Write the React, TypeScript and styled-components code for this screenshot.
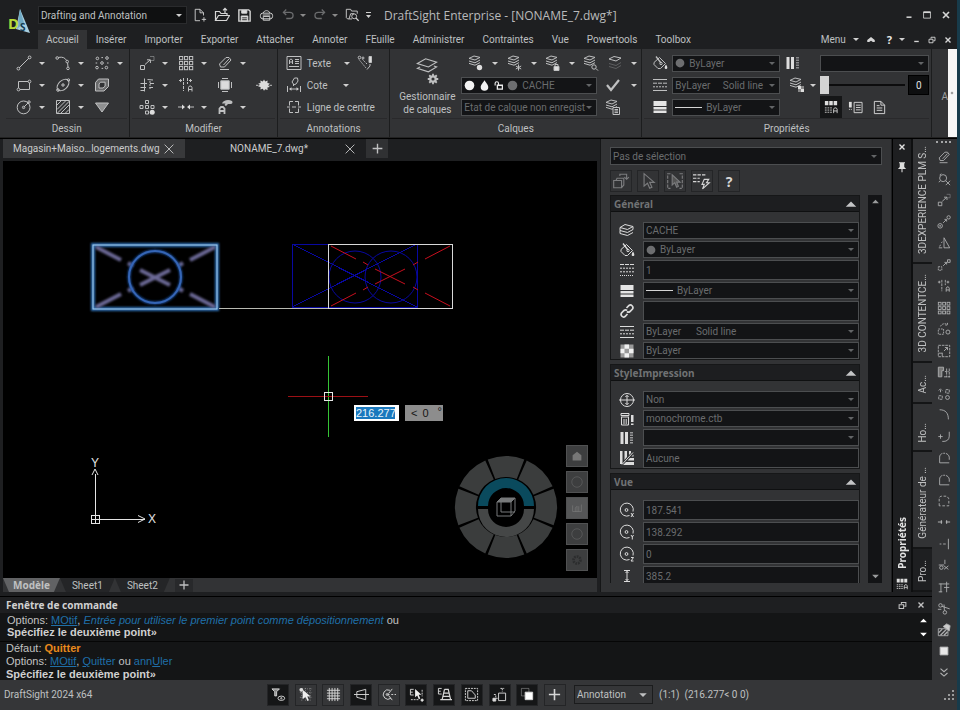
import React from "react";
import styled, { createGlobalStyle, css } from "styled-components";

const UI = `Roboto, "Noto Sans", sans-serif`;
const BOLD = `"Noto Sans", "Open Sans", sans-serif`;
const CMD = `"Liberation Sans", Arial, sans-serif`;

const c = {
  title: "#1e1f21",
  panel: "#323335",
  dark: "#1d1e20",
  field: "#131416",
  border: "#4c4e50",
  text: "#bfc0c1",
  dim: "#6a6c6e",
  link: "#1f6fa8",
};

const GlobalStyle = createGlobalStyle`
  *, *::before, *::after { box-sizing: border-box; }
  html, body { margin: 0; background: ${c.title}; }
  body { font-family: ${UI}; font-size: 10px; color: ${c.text}; }
  button, input, select { font: inherit; color: inherit; margin: 0; padding: 0; border: 0; background: none; border-radius: 0; outline: 0; }
  button { display: inline-flex; align-items: center; justify-content: center; cursor: default; white-space: nowrap; }
  select { appearance: none; opacity: 1; }
  svg { display: block; flex: none; }
`;

/* ---------- icons ---------- */

const layers = (
  <path d="M1 4.500 6 1.500 14 3.500 8.500 6.500ZM1 4.500V7.500L8.500 9.500 14 6.500M1 7.500v3L8.500 12.500 14 9.500M14 3.500v3" />
);
const bigLayers = <path d="M1 5.500 7 2 15 4.500 9 8ZM3 8 1 9l8 2.500 6-3.500-2-.7" strokeWidth=".8" />;
const flatLayers = <path d="M1 3.400 6 1 12 2.400 7 5ZM1 6 7 7.800 12 5M1 8.400 7 10.200 12 7.600" />;

const glyphs: Record<string, React.ReactNode> = {
  line: <><path d="M3 13 13 3" /><circle cx="2.4" cy="13.6" r="1.4" /><circle cx="13.6" cy="2.4" r="1.4" /></>,
  arc: <><path d="M3.400 2.400C8 1.600 10 3 11.600 5.400M12.600 8 13 12" /><circle cx="2.200" cy="3" r="1.300" /><circle cx="12.200" cy="6.600" r="1.300" /><circle cx="13" cy="13.400" r="1.300" /></>,
  points: <><circle cx="3.400" cy="3.400" r="1.300" /><circle cx="13" cy="3" r="1.300" /><circle cx="8" cy="8" r="1.300" /><circle cx="3" cy="12.600" r="1.300" /><circle cx="12.400" cy="12.600" r="1.300" /><path d="M7.400 2.600h1.600M1.600 8h1.600M13 8h1.600M7.600 13.400h1.600" /></>,
  rect: <><path d="M2.500 4.500h11v8h-11z" /><g fill="#323335"><circle cx="2.500" cy="12.500" r="1.400" /><circle cx="13.500" cy="4.500" r="1.400" /></g></>,
  ellipse: <><ellipse cx="8" cy="8" rx="7" ry="4.400" transform="rotate(-42 8 8)" /><path d="M8 6v4M6 8h4" /><circle cx="3" cy="13" r="1.300" /><circle cx="13.500" cy="3" r="1.200" /></>,
  region: <><path d="M4.500 2h10v7.500l-4.500 4.500H1.500V5.500Z" fill="#6a6b6c" /><path d="M6.500 5.200h4.600v4L9 11H5V7Z" fill="#323335" /></>,
  circle: <><circle cx="7.600" cy="8.400" r="6.400" /><path d="M7.600 8.400 12.600 3.400" /><circle cx="7.600" cy="8.400" r="1.200" /><circle cx="13" cy="3" r="1.200" /></>,
  hatch: <><path d="M1.500 1.500h13v13h-13z" /><path d="M2 6 6 2M2 10.500 10.500 2M2 14.500 14.500 2M6 14 14 6M10.500 14 14 10.500" /></>,
  tri: <path d="M1.500 4h13L8 13Z" fill="#8f9091" />,
  move: <><path d="M1.500 10.500h4v4h-4z" /><path d="M6 9.500 11 5M8 4.800h3.400V8" /><path d="M11 1.500h4v4h-3" opacity=".45" /></>,
  copy: <><circle cx="3.600" cy="12.400" r="2.600" /><circle cx="3.600" cy="12.400" r=".6" /><path d="M7 9 10.500 5.500M8.500 5h2.500v2.500" /><circle cx="13.300" cy="2.700" r="1.900" /></>,
  grid: <>{[1.5, 6.5, 11.5].map((y) => [1.5, 6.5, 11.5].map((x) => <rect key={`${x}${y}`} x={x} y={y} width="3.2" height="3.2" />))}</>,
  eraser: <><path d="M2.500 9 9 2.500h3L14 5l-6.500 7H3.500Z" /><path d="M6.500 10 12 4M3 14.500h9" /></>,
  trim: <><path d="M5.500 1.500v13M1.500 6.500H8M11 6.500h4M8.500 2.500 14 3M1.500 10.500H7M10.500 10.500H14M1.500 13.500h4" /><path d="M11 4v8" strokeDasharray="2 1" /></>,
  align: <><path d="M5.500 1v13M9.500 1v6" strokeDasharray="3 1" /><path d="M1 3.500h3M2.600 2v3M11 3.500h3M12.500 2v3" /><path d="M10.500 14.500v-4l1-1.500h1.500l1 1.500v4M10.500 12.500h3.500" /></>,
  explode: <><path d="M3.800 3.800h8.400v8.400H3.800z" fill="#dcdcdc" /><path d="M5 1.500h6M5 14.500h6M1.500 5v6M14.500 5v6" /></>,
  burst: <><path d="m8 2.500 1.200 2 2.400-1-.2 2.500 2.400.6-1.600 1.700 1.600 1.800-2.400.5.2 2.500-2.400-.9L8 13.800l-1.200-2.100-2.400.9.2-2.500-2.400-.5 1.600-1.800L2.200 6.600l2.400-.6-.2-2.500 2.400 1Z" fill="#dcdcdc" stroke="none" /><path d="M0 8.300h2.500M13.500 8.300H16" /></>,
  pattern: <><path d="M6.500 1.500h3v3h-3zM1 6.500h3v3H1zM6.500 6.500h3v3h-3zM12 6.500h3v3h-3zM6.500 12h3v3h-3z" /><circle cx="13.200" cy="13.200" r="2.500" fill="#dcdcdc" stroke="none" /></>,
  join: <><path d="M0 8h5M16 8h-5" /><path d="M4 5.500 7 8l-3 2.500ZM12 5.500 9 8l3 2.500Z" fill="#ddd" stroke="none" /></>,
  paintA: <><path d="M5 4.500C6 1.500 11 0 15 2c1 1 .5 3-1.500 3H11L9 7 7.500 6l1-1.500Z" fill="#bdbebf" stroke="none" /><path d="M2.500 15V9.500L4 8h2L7.500 9.500V15M2.500 12h5" strokeWidth="1.800" /></>,
  text: <><path d="M1 1.500h14v13H1z" /><path d="M3.500 9V5L5 4l1.500 1v4M3.500 7h3M9 4.500h4M9 6.500h4M9 8.500h4M3 11.500h10" /></>,
  dim: <><path d="M1.500 9v6M14.500 9v6M4 12h8" /><path d="m3 12 2.500-1.700v3.400ZM13 12l-2.500-1.700v3.400Z" fill="#ccc" stroke="none" /><path d="M7.500 9V7L6 5l2.500-4h3l.5 3-2 3-2.500 1" /></>,
  center: <><path d="M3.500 2.500H7M9 2.500h3.500v4M3.500 2.500v4M3.500 9.500v4H7M12.500 9.500v4H9M1 8h3M6 8h4M12 8h3" /></>,
  brushText: <><path d="M12 1.500h2.500v6H12z" fill="#ddd" /><path d="M13 9v2l-3 3.500" /><path d="M2 4.500 9 13M5.500 4.500 10 9" strokeDasharray="1.500 1" /><circle cx="2.500" cy="2.500" r="1.300" /><circle cx="6" cy="3" r="1" /></>,
  layerDot: <>{flatLayers}<circle cx="11.500" cy="12.500" r="2.700" fill="#ddd" stroke="none" /></>,
  layerStar: <>{flatLayers}<path d="M11.500 9.500v6M8.800 11l5.400 3M14.200 11l-5.400 3" /></>,
  layerLock: <>{flatLayers}<path d="M9 11.500h5v4H9z" fill="#ddd" /><path d="M10 11.500V9.500h3v2" /></>,
  layerFind: <>{flatLayers}<circle cx="11" cy="12" r="2.200" /><path d="m13 13.600 2 2" /></>,
  layerTwo: <><path d="M2 4 7 1.500 14 3 9 6Z" /><path d="M2 8.500 9 10.500 14 7.500M2 11.500 9 13.500 14 10.500" opacity=".3" /></>,
  layerSheet: <>{flatLayers}<path d="M8 8.500h6.500v7H8z" fill="#323335" /><path d="M9.500 10.500h3.500M9.500 12h3.500M9.500 13.600h3.500" /></>,
  layerChecker: <>{flatLayers}<path d="M9 9h3v3H9zM12 12h3v3h-3z" fill="#ddd" stroke="none" /><path d="M12 9h3v3h-3zM9 12h3v3H9z" fill="#888" stroke="none" /></>,
  layers,
  bigLayers,
  gear: <><circle cx="8" cy="8" r="3.600" strokeWidth="3" /><path d="M8 1v3M8 12v3M1 8h3M12 8h3M3 3l2 2M11 11l2 2M13 3l-2 2M5 11l-2 2" strokeWidth="2.400" /></>,
  check: <path d="m2 8 4 5 8-10" strokeWidth="2.200" />,
  bucket: <><path d="M2 7.500 7.500 2.500l6 6-5 5H6L2 9.500Z" /><path d="M4 1.500 9 8" strokeWidth="1.300" /><circle cx="9" cy="8.500" r="1.200" /><path d="M14 9.500c1.800 2.500 1.800 4.500 0 4.500s-1.800-2 0-4.500Z" fill="#ddd" stroke="none" /></>,
  ltype: <><path d="M1 2.500h14M1 13.500h14" /><path d="M1 6.200h14" strokeDasharray="4 1" /><path d="M1 9.800h14" strokeDasharray="2 1" /></>,
  lscale: <><path d="M1 2.500h14" strokeDasharray="4 1" /><path d="M1 6.200h14M1 9.800h14" strokeDasharray="2 1" /><path d="M1 13.500h14" strokeDasharray="1 1" /></>,
  lweight: <path d="M1.500 2h13v5h-13zM1.500 8h13v2.500h-13zM1.500 11.500h13V14h-13z" fill="#e4e4e4" stroke="none" />,
  bars: <><path d="M1.500 2h3v12h-3zM6 2h3v12H6z" fill="#ddd" stroke="none" /><path d="M12.500 2v12" strokeWidth="3" strokeDasharray="1.500 1" opacity=".6" /></>,
  link: <path d="m7.500 5 2.500-2.500c2-1.500 5 1 3.500 3.500L11 8.500c-1 .8-2.200.7-3 0M8.500 11 6 13.500c-2 1.500-5-1-3.500-3.500L5 7.500c1-.8 2.200-.7 3 0" strokeWidth="1.700" />,
  checker: <><path d="M1.500 1.500h13v13h-13z" fill="#999" stroke="none" /><path d="M5.500 1.500h4.500v4.200H5.500zM1.500 5.700h4v4.500h-4zM10 5.700h4.500v4.500H10zM5.500 10.200H10v4.300H5.500z" fill="#f0f0f0" stroke="none" /></>,
  styleA: <><path d="M1 1h4v5H1zM6 1h4v5H6zM11 1h4v5h-4z" fill="#ddd" stroke="none" /><path d="M1 9h8M1 11.500h8M1 14h8" strokeDasharray="2 1" /><path d="M11 15v-4.500L12 9h2l1 1.500V15M11 12.500h4" /></>,
  panelList: <><path d="M6.500 2.500h8.500v11H6.500z" /><path d="M8.500 5.500h5M8.500 8h5M8.500 10.500h5" /><path d="M1 2h3v6H1z" fill="#ddd" stroke="none" /><path d="M1 10h3" strokeDasharray="1 1" /></>,
  page: <><path d="M2.500 1.500h7l4 4v9h-11z" /><path d="M5 6h3M5 8.500h6M5 11h6M9.500 1.500v4h4" /></>,
  neww: <><path d="M8 14.500H2.500v-13H8l4 4v3" /><path d="M8 1.500v4h4M12.500 10.500v5M10 13h5" /></>,
  open: <><path d="M1.500 13.500V4.500h4l1.500 2h6v2M1.500 13.500l3-5h11l-3 5Z" strokeWidth="1.200" /><path d="M11 6V1.500M9 3.300l2-2 2 2" strokeWidth="1.200" /></>,
  save: <><path d="M2 2h10.500L14 3.500V14H2z" strokeWidth="1.500" /><path d="M5 2.500h5.500v3H5zM4.500 8.500h7V14h-7z" fill="#ddd" /><path d="M5.500 10.500h5M5.500 12.500h5" stroke="#222" /></>,
  print: <><rect x="1.500" y="5.500" width="13" height="6" rx="2.500" /><path d="M4.500 5.500C5 2 11 2 11.500 5.500M4.500 9h7v4h-7z" /><path d="M4 7.500h8" /></>,
  undo: <><path d="M3 5h7c5 0 5 7 0 7H6" strokeWidth="1.500" /><path d="M6 1.800 2.800 5 6 8" strokeWidth="1.500" /></>,
  redo: <><path d="M13 5H6C1 5 1 12 6 12h4" strokeWidth="1.500" /><path d="M10 1.800 13.200 5 10 8" strokeWidth="1.500" /></>,
  find: <><path d="M8 12.500H3L1.500 11V1.500h5l1 2h6.500v3M4.500 12.500l2-6h4" /><circle cx="10.500" cy="9.500" r="2.800" /><path d="m12.600 11.600 3 3" strokeWidth="1.500" /></>,
  box: <><path d="M1.500 7.500h7v6.500h-7zM3.500 7.500l1-2h6v6l-2 2.500" /><path d="M7 3.500V2h6v4M11 4.500l2 2 2-2" /></>,
  cursor: <path d="M4.500 1.500v11l3-2.500 2 4.500 2-1-2-4.300h4Z" />,
  cursorBox: <><path d="M4 1.500H1.500v13H4M12 1.500h2.500v13H12" strokeDasharray="3 1" /><path d="M5.500 2.500v9l2.300-2 1.700 4 1.500-.8L9.500 9h3Z" fill="#555" /></>,
  flash: <><path d="M0 2.500h12M0 5.500h6M0 8.500h6" strokeDasharray="3 1" /><path d="M10 6.500h4l-2 3h2.500L8.500 15l1.500-4H8Z" /></>,
  printer: <><path d="M2 2.500h8v2H2zM2 6h8M2.500 6v8h7V6M5 8v5M7.200 8v5" /><path d="M12 4h2.500v7H12zM12 12.500h2.500V14H12z" fill="#ddd" stroke="none" /></>,
  globe: <><circle cx="8" cy="8" r="6.500" /><path d="M0 8h16M8 3.500v9M6.400 5 8 3.300 9.600 5M6.400 11 8 12.700 9.600 11" /></>,
  rays: <><path d="M1 1h2.500v13L1 14ZM5.500 1H8v6l-2.500 3ZM10 1h2v2l-2 2ZM4 15l3-3h8v3ZM8.500 10.500 11 8h4v2.500ZM12.500 6.500l2-2v2Z" fill="#ddd" stroke="none" /><path d="M3 14.500 14 2.500" /></>,
  cx: <><path d="M14 9.500a6.500 6.500 0 1 0-3.500 4" /><circle cx="7.500" cy="8" r="1.400" /><path d="m12 11 2.500 4M14.500 11 12 15" /></>,
  cy: <><path d="M14 9.500a6.500 6.500 0 1 0-3.500 4" /><circle cx="7.500" cy="8" r="1.400" /><path d="m12 11 1.300 2L14.500 11M13.300 13v2.500" /></>,
  cz: <><path d="M14 9.500a6.500 6.500 0 1 0-3.500 4" /><circle cx="7.500" cy="8" r="1.400" /><path d="M12 11.500h2.500L12 15h2.500" /></>,
  height: <path d="M5 2.500h6M5 13.500h6M8 3v10M6.500 5 8 3.500 9.500 5M6.500 11 8 12.500 9.500 11" />,
  copyO: <><circle cx="7" cy="7" r="4" /><path d="M3 3.500 5 2M2 11.500l1.500-1M10 10l5 5M15 10l-5 5" /></>,
  tri2: <path d="M8 2v11.500h6.500ZM3 12l1-2M6 6.500 5 8M2 13.500h4" />,
  moveB: <><path d="M1.500 10h4v4h-4z" strokeDasharray="2 1" /><path d="M7 9 11 5M8.500 5H11v2.500" /><path d="M12 2h3v3h-3z" /></>,
  rotate: <><path d="M1.500 8h6v6h-6zM4 5c1-3 5-4 8-2M12 1v2.500H9.500" strokeDasharray="2 1" /><circle cx="12.500" cy="11.500" r="2.300" /></>,
  scale: <><path d="M1.500 1.500h13v13h-13z" strokeDasharray="3 1" /><path d="M6 10.500h-4M6 10v4M8 8l4-4M9 4h3v3" /></>,
  stretch: <><path d="M1.500 2.500h6v4h-2v7h-4z" fill="#777" /><path d="M9 7.500h5M8 13.500h7M11 4v10M14 4v10" strokeDasharray="3 1" /></>,
  swap: <><path d="M10 3h4v4h-4zM2 4l2-2 2 2M4 3v4M2 10h4v4H2z" strokeDasharray="3 1" /><circle cx="12" cy="12" r="2.200" /></>,
  curve: <path d="M3 2c7 0 10 4 10 11" />,
  curveP: <><path d="M14 2v5c0 4-3 6-6 6H6" /><path d="M4 5v5M1.500 7.500h5" /></>,
  chamR: <path d="M3 13.500V7c0-6 10-6 11 0v3M3 13.500h11" strokeDasharray="12 1 2 1" />,
  cham2: <path d="M2.500 13.500V4l2-1.500h7l2 3v8z" strokeDasharray="3 2" />,
  vjoin: <path d="M1 8h5M15 8h-5M5 6v4M11 6v4" strokeWidth="1.300" />,
  vline: <path d="M13 2v12M3 8h2M7 8h3" />,
  trim2: <><path d="M2 8h6M9 2v5M8 9l5 4M13 9l-5 4" /><circle cx="5" cy="11" r="2" /></>,
  trim3: <path d="M2 4.500h12M4.500 4v10M8 8.500h6M11 2v12M2 13.500h4" />,
  scis: <><circle cx="4" cy="5" r="2" /><circle cx="9" cy="13" r="2" /><path d="m5.500 6 9 3M8.500 11 8 4M1 9.500h4" /></>,
  hatchEd: <><path d="M1.500 6.500h11v8h-11z" /><path d="m2 11 4-4M4 14l7-7M8 14l4-4" strokeWidth="1.500" /><path d="M7 4 11 1l4 2-1 6-4-3Z" fill="#ccc" /></>,
  sq: <path d="M3.500 3.500h9v9h-9z" fill="#e8e8e8" />,
  chev: <path d="m4 3 4 3.500L12 3M4 8l4 3.500L12 8" strokeWidth="1.300" />,
  eye: <><path d="M1 2h8L6 5v4.500H4V5Z" fill="#888" /><ellipse cx="11" cy="12" rx="3.600" ry="2.300" /><circle cx="11" cy="12" r=".7" /></>,
  snap: <><path d="M2 2h13M2 6h13M2 11h13M4 1v14M8 1v14M13 1v14" strokeDasharray="1 1.500" opacity=".5" /><path d="M5 3v10l3-2.500L10 15l1.700-.8L9.800 10h3.700Z" fill="#eee" stroke="none" /><circle cx="3.500" cy="3" r="2" fill="#ddd" stroke="none" /></>,
  gridOn: <path d="M1 3.500h14M1 6.500h14M1 9.500h14M1 12.500h14M3.500 1v14M6.500 1v14M9.500 1v14M12.500 1v14" />,
  ortho: <path d="M3 5 12.500 2.500v11L3 11ZM0 8h16" />,
  polar: <><path d="M9.500 3.500a5 5 0 1 0 1 8.500M7 8h2M11 8h2M14.500 8h1.500M8 7l4-5M8 9l4 5" /><circle cx="6.500" cy="8" r="1" /></>,
  esnap: <><path d="M5 2.500H1.500v6H5M1.500 5.500H4" /><path d="M6.500 2v9l2.300-2 1.700 4 1.500-.7-1.700-4h3Z" fill="#eee" stroke="none" /><path d="M2 13.500h8M14 3v7" strokeDasharray="2 1" /><circle cx="14" cy="14" r="1.200" fill="#eee" /></>,
  etrack: <><path d="M5 1.500H1.500v6H5M1.500 4.500H4" /><path d="M8 2.500h4l2.500 11M8 2.500l-2.500 11M7.500 6.500h5.500M6.500 10h7.500M3.500 13.500h12.500" strokeWidth="1.300" /></>,
  quick: <><path d="M1.500 1.500h13v13h-13z" strokeDasharray="2 1" /><path d="M4 12V4h4l4 4.500V12Z" /></>,
  dyn: <><path d="M7 6.500h7.500v8H7z" /><path d="M9 1.500h4M11 1.500V5M2 8h2v4h2" strokeDasharray="2 1" /><path d="M1 12h3v3H1z" fill="#ddd" /></>,
  over: <><path d="M1.500 1.500h8v8h-8z" opacity=".4" /><path d="M5.500 5.500h8v8h-8z" fill="#fff" /></>,
  plus: <path d="M8 2v12M2 8h12" strokeWidth="1.700" />,
  close: <path d="m3 3 10 10M13 3 3 13" />,
  xb: <path d="m4 4 8 8M12 4l-8 8" strokeWidth="2.200" />,
  min: <path d="M4 11.500h8" strokeWidth="2.400" />,
  max: <><path d="M2.500 3h11v10h-11z" strokeWidth="1.300" /><path d="M2.500 3.700h11" strokeWidth="2.400" /></>,
  restore: <><path d="M6 5.500v-3h8v7h-3" strokeWidth="1.800" /><path d="M2 6.500h8v7H2z" strokeWidth="1.800" /></>,
  pin: <><path d="M4 1.500h8v1.600h-1V8l2.500 2.500h-11L5 8V3.100H4z" fill="#ddd" stroke="none" /><path d="M8 10v5" strokeWidth="1.400" /></>,
  house: <path d="M3 13V7l5-4 5 4v6Z" fill="#777" stroke="none" />,
  ring: <circle cx="8" cy="8" r="6" opacity=".35" />,
  pic: <path d="M3 5v7h10V4M6 12V8l2-2v6M10 6v6" opacity=".5" />,
  cog: <circle cx="8" cy="8" r="4" strokeWidth="3" strokeDasharray="2 1" stroke="#2c2d2e" />,
  up: <path d="M2 11 8 5l6 6Z" fill="currentColor" stroke="none" />,
  down: <path d="m2 5 6 6 6-6Z" fill="currentColor" stroke="none" />,
  fold: <path d="M2 8 8 3l6 5v3H11L8 9l-3 2H2Z" fill="currentColor" stroke="none" />,
  bulb: <circle cx="8" cy="8" r="7" fill="#f2f2f2" stroke="none" />,
  grey: <circle cx="8" cy="8" r="7" fill="#6d6e70" stroke="none" />,
  drop: <path d="M8 .5c4 6 5.500 7.500 5.500 10a5.500 5 0 0 1-11 0C2.500 8 4 6.500 8 .5Z" fill="#f2f2f2" stroke="none" />,
  unlock: <><path d="M6 7.500h9v7H6z" stroke="#ececec" strokeWidth="2.400" /><path d="M2 8V4c0-3.500 6-3.500 6 0v3" stroke="#ececec" strokeWidth="2" /></>,
  far: <path d="M3 8h10M8 3v10" strokeWidth="2" />,
};

const Icon = ({ name, size = 16, color }: { name: string; size?: number; color?: string }) => (
  <svg width={size} height={size} viewBox="0 0 16 16" fill="none" stroke="currentColor" strokeWidth="1" color={color} aria-hidden="true">
    {glyphs[name]}
  </svg>
);

const Caret = ({ color = "#d0d0d0" }: { color?: string }) => (
  <svg width="6" height="3" viewBox="0 0 6 3" aria-hidden="true">
    <path d="M0 0h6L3 3Z" fill={color} />
  </svg>
);

/* ---------- shared parts ---------- */

const Frame = styled.div`
  display: flex;
  flex-direction: column;
  height: 100vh;
  border-right: 3px solid #173b4b;
  background: ${c.title};
`;
const Field = styled.div<{ $h?: number }>`
  display: flex;
  align-items: center;
  flex: 1;
  min-width: 0;
  height: ${(p) => p.$h ?? 17}px;
  padding: 0 4px 0 2px;
  background: ${c.field};
  border: 1px solid ${c.border};
  color: ${c.dim};
  select, input { flex: 1; min-width: 0; width: 100%; }
`;
const Lead = styled.span`
  display: flex;
  align-items: center;
  gap: 4px;
  margin-right: 4px;
`;
const WeightLine = styled.span`
  width: 27px;
  border-top: 1px solid #d5d5d5;
`;

type PickProps = { label: string; value: string; lead?: React.ReactNode; h?: number };
const Pick = ({ label, value, lead, h }: PickProps) => (
  <Field $h={h}>
    {lead && <Lead>{lead}</Lead>}
    <select aria-label={label} defaultValue={value}>
      <option>{value}</option>
    </select>
    <Caret color="#636567" />
  </Field>
);

/* ---------- top ---------- */

const Top = styled.header`
  display: grid;
  grid-template-columns: 38px 1fr;
  height: 49px;
  background: ${c.title};
`;
const Logo = styled.div`
  display: flex;
  align-items: center;
  padding: 0 0 6px 6px;
`;
const TitleBar = styled.div`
  display: flex;
  align-items: center;
  height: 30px;
  padding-right: 5px;
`;
const Workspace = styled.div`
  display: flex;
  align-items: center;
  width: 149px;
  height: 18px;
  margin-right: 6px;
  padding: 0 4px 0 2px;
  background: #0f1011;
  border: 1px solid #2a2b2d;
  select { flex: 1; }
`;
const QuickBar = styled.div`
  display: flex;
  align-items: center;
  gap: 7px;
  width: 177px;
`;
const QuickPair = styled.span`
  display: flex;
  align-items: center;
  gap: 5px;
`;
const QuickButton = styled.button<{ $off?: boolean }>`
  color: ${(p) => (p.$off ? "#6b6c6e" : "#d6d6d6")};
  min-height: 16px;
`;
const AppTitle = styled.h1`
  margin: 0;
  flex: 1;
  padding-left: 14px;
  font: 400 12px "Open Sans", "Noto Sans", sans-serif;
  white-space: nowrap;
  color: #b9babb;
`;
const WinButtons = styled.div<{ $gap: number }>`
  display: flex;
  align-items: center;
  gap: ${(p) => p.$gap}px;
  color: #e8e8e8;
`;
const TabRow = styled.nav`
  display: flex;
  align-items: stretch;
  height: 19px;
  padding-right: 4px;
`;
const RibbonTab = styled.button<{ $on?: boolean }>`
  padding: 0 9px;
  color: ${c.text};
  background: ${(p) => (p.$on ? c.panel : "none")};
  &:first-child { padding: 0 8px; }
`;
const Push = styled.span`
  flex: 1;
`;
const MenuButton = styled.button`
  color: ${c.text};
`;
const HelpButton = styled.button`
  margin-left: 4px;
  font: 700 11px ${BOLD};
`;

const ribbonTabs = ["Accueil", "Insérer", "Importer", "Exporter", "Attacher", "Annoter", "FEuille", "Administrer", "Contraintes", "Vue", "Powertools", "Toolbox"];

const TopArea = () => (
  <Top>
    <Logo>
      <svg width="26" height="30" viewBox="0 0 26 30" role="img" aria-label="DraftSight">
        <path d="M14 2 24 26 10 22Z" fill="#a9cfe0" />
        <path d="M14 2 11 22 18 16Z" fill="#6fa9c4" />
        <text x="2" y="22" fontFamily={BOLD} fontSize="15" fontWeight="700" fill="#b5da3a">D</text>
        <text x="14" y="24" fontFamily={BOLD} fontSize="10" fontWeight="700" fill="#123c52">S</text>
      </svg>
    </Logo>
    <div>
      <TitleBar>
        <Workspace>
          <select aria-label="Espace de travail" defaultValue="Drafting and Annotation">
            <option>Drafting and Annotation</option>
          </select>
          <Caret />
        </Workspace>
        <QuickBar>
          <QuickButton aria-label="Nouveau"><Icon name="neww" size={14} /></QuickButton>
          <QuickButton aria-label="Ouvrir"><Icon name="open" /></QuickButton>
          <QuickButton aria-label="Enregistrer"><Icon name="save" size={15} /></QuickButton>
          <QuickButton aria-label="Imprimer"><Icon name="print" size={15} /></QuickButton>
          <QuickPair><QuickButton $off aria-label="Annuler"><Icon name="undo" size={14} /></QuickButton><Caret color="#8a8a8a" /></QuickPair>
          <QuickPair><QuickButton $off aria-label="Rétablir"><Icon name="redo" size={14} /></QuickButton><Caret color="#8a8a8a" /></QuickPair>
          <QuickButton aria-label="Aperçu"><Icon name="find" size={14} /></QuickButton>
          <svg width="5" height="6" viewBox="0 0 5 6" fill="#d0d0d0" aria-hidden="true"><path d="M0 0h5v1H0zM0 3h5L2.500 6Z" /></svg>
        </QuickBar>
        <AppTitle>DraftSight Enterprise - [NONAME_7.dwg*]</AppTitle>
        <WinButtons $gap={8}>
          <QuickButton aria-label="Réduire"><Icon name="min" size={10} /></QuickButton>
          <QuickButton aria-label="Agrandir"><Icon name="max" size={10} /></QuickButton>
          <QuickButton aria-label="Fermer"><Icon name="xb" size={12} /></QuickButton>
        </WinButtons>
      </TitleBar>
      <TabRow>
        {ribbonTabs.map((t, i) => <RibbonTab key={t} $on={i === 0}>{t}</RibbonTab>)}
        <Push />
        <WinButtons $gap={7}>
          <MenuButton>Menu</MenuButton>
          <Caret />
          <QuickButton aria-label="Replier le ruban"><Icon name="fold" size={10} /></QuickButton>
          <HelpButton>?</HelpButton>
          <Caret />
          <QuickButton aria-label="Réduire le document"><Icon name="min" size={9} /></QuickButton>
          <QuickButton aria-label="Restaurer le document"><Icon name="restore" size={8} /></QuickButton>
          <QuickButton aria-label="Fermer le document"><Icon name="xb" size={10} /></QuickButton>
        </WinButtons>
      </TabRow>
    </div>
  </Top>
);

/* ---------- ribbon ---------- */

const Ribbon = styled.section`
  display: grid;
  grid-template-columns: 127fr 148fr 113fr 253fr 291fr 16fr 9px;
  height: 89px;
  padding-left: 4px;
  background: ${c.panel};
  border-bottom: 1px solid #222;
`;
const Group = styled.div`
  display: flex;
  flex-direction: column;
  min-width: 0;
  padding-top: 3px;
  border-right: 1px solid #1c1d1e;
`;
const GroupBody = styled.div<{ $pad?: number }>`
  display: flex;
  height: 66px;
  padding-left: ${(p) => p.$pad ?? 0}px;
`;
const GroupName = styled.div`
  flex: 1;
  display: flex;
  align-items: center;
  justify-content: center;
  margin: 0 2px;
  border-top: 1px solid #29292b;
`;
const Cells = styled.div<{ $cols: number }>`
  display: grid;
  grid-template-columns: repeat(${(p) => p.$cols}, 39px);
  grid-auto-rows: 22px;
`;
const Cell = styled.div`
  display: flex;
  align-items: center;
  gap: 7px;
`;
const Rows = styled.div<{ $w?: number; $gap?: number }>`
  display: grid;
  flex: none;
  grid-template-columns: minmax(0, 1fr);
  grid-auto-rows: 22px;
  align-items: center;
  align-content: start;
  ${(p) => p.$w && css`width: ${p.$w}px;`}
  margin-right: ${(p) => p.$gap ?? 0}px;
`;
const Line = styled.div<{ $gap?: number; $pad?: number }>`
  display: flex;
  align-items: center;
  gap: ${(p) => p.$gap ?? 7}px;
  padding-left: ${(p) => p.$pad ?? 0}px;
`;
const LayerTools = styled.div`
  display: flex;
  align-items: center;
  justify-content: space-between;
  padding-left: 7px;
`;
const WideButton = styled.button<{ $w?: number }>`
  gap: 5px;
  justify-content: flex-start;
  ${(p) => p.$w && css`width: ${p.$w}px;`}
`;
const BigButton = styled.button`
  flex-direction: column;
  justify-content: flex-start;
  flex: none;
  width: 62px;
  margin-right: 3px;
  padding-top: 4px;
  line-height: 13px;
  white-space: normal;
`;
const BigIcon = styled.span`
  display: flex;
  flex-direction: column;
  align-items: center;
  height: 34px;
  svg + svg { margin-left: 12px; margin-top: -5px; }
`;
const Slider = styled.input`
  appearance: none;
  flex: 1;
  min-width: 0;
  height: 19px;
  background: linear-gradient(#0c0c0d, #0c0c0d) center / 100% 2px no-repeat;
  &::-webkit-slider-thumb {
    appearance: none;
    width: 9px;
    height: 18px;
    background: #d3d3d3;
  }
`;
const ValueBox = styled.output`
  display: grid;
  place-items: center;
  width: 21px;
  height: 20px;
  background: #0e0f10;
  border: 1px solid #000;
  color: #e0e0e0;
`;
const ToolButton = styled.button<{ $on?: boolean; $border?: boolean; $off?: boolean }>`
  width: 22px;
  height: 22px;
  background: ${(p) => (p.$on ? "#151617" : "none")};
  border: 1px solid ${(p) => (p.$border ? "#242527" : "transparent")};
  color: ${(p) => (p.$off ? "#7b7c7e" : "#d6d6d6")};
  font: 700 14px ${BOLD};
`;
const FarGroup = styled.div`
  display: flex;
  align-items: center;
  justify-content: flex-end;
  padding-top: 6px;
  color: #9fa0a1;
`;
const FarEdge = styled.button`
  background: #f6f6f6;
  color: #333;
`;
const StackIcon = styled.div`
  display: flex;
  align-items: center;
  justify-content: space-between;
  width: 32px;
`;

type C = [string, string, boolean];
const draw: C[] = [["line", "Ligne", true], ["arc", "Arc", true], ["points", "Point", true], ["rect", "Rectangle", true], ["ellipse", "Ellipse", true], ["region", "Région", false], ["circle", "Cercle", true], ["hatch", "Hachure", true], ["tri", "Masque", false]];
const modify: (C | null)[] = [["move", "Déplacer", true], ["grid", "Réseau", true], ["eraser", "Supprimer", true], null, ["trim", "Ajuster", true], ["align", "Aligner", false], ["explode", "Bordure", false], ["burst", "Exploser", false], ["pattern", "Motif", true], ["join", "Joindre", true], ["paintA", "Copier propriétés", true]];

const CellGrid = ({ items, cols }: { items: (C | null)[]; cols: number }) => (
  <Cells $cols={cols}>
    {items.map((it, i) => (
      <Cell key={i}>
        {it && <button aria-label={it[1]}><Icon name={it[0]} /></button>}
        {it && it[2] && <Caret />}
      </Cell>
    ))}
  </Cells>
);

const RibbonArea = () => (
  <Ribbon>
    <Group>
      <GroupBody $pad={12}><CellGrid items={draw} cols={3} /></GroupBody>
      <GroupName>Dessin</GroupName>
    </Group>
    <Group>
      <GroupBody $pad={9}><CellGrid items={modify} cols={4} /></GroupBody>
      <GroupName>Modifier</GroupName>
    </Group>
    <Group>
      <GroupBody $pad={8}>
        <Rows>
          <Line $gap={1}>
            <WideButton $w={57}><Icon name="text" />Texte</WideButton>
            <Line $gap={7}><Caret /><button aria-label="Style de texte"><Icon name="brushText" /></button></Line>
          </Line>
          <Line $gap={0}><WideButton $w={57}><Icon name="dim" />Cote</WideButton><Caret /></Line>
          <WideButton><Icon name="center" />Ligne de centre</WideButton>
        </Rows>
      </GroupBody>
      <GroupName>Annotations</GroupName>
    </Group>
    <Group>
      <GroupBody $pad={6}>
        <BigButton>
          <BigIcon><Icon name="bigLayers" size={22} /><Icon name="gear" size={12} /></BigIcon>
          Gestionnaire de calques
        </BigButton>
        <Rows $w={176}>
          <LayerTools>
            {["layerDot", "layerStar", "layerLock"].map((n) => (
              <React.Fragment key={n}><button aria-label={n}><Icon name={n} /></button><Caret /></React.Fragment>
            ))}
            <button aria-label="Rechercher un calque"><Icon name="layerFind" /></button>
            <button aria-label="Isoler le calque"><Icon name="layerTwo" /></button><Caret />
          </LayerTools>
          <Line $gap={8}>
            <Pick label="Calque actif" value="CACHE" lead={<><Icon name="bulb" size={11} /><Icon name="drop" size={11} /><Icon name="unlock" size={9} /><Icon name="grey" size={11} /></>} />
            <StackIcon><button aria-label="Activer le calque"><Icon name="check" /></button><Caret /></StackIcon>
          </Line>
          <Line $gap={8}>
            <Pick label="État de calque" value="Etat de calque non enregist" />
            <StackIcon><button aria-label="États de calque"><Icon name="layerSheet" /></button></StackIcon>
          </Line>
        </Rows>
      </GroupBody>
      <GroupName>Calques</GroupName>
    </Group>
    <Group>
      <GroupBody $pad={10}>
        <Rows $w={128} $gap={5}>
          <Line $gap={4}><Icon name="bucket" /><Pick label="Couleur" value="ByLayer" lead={<Icon name="grey" size={10} />} /></Line>
          <Line $gap={4}><Icon name="ltype" /><Pick label="Type de ligne" value={"ByLayer\u00a0\u00a0\u00a0\u00a0\u00a0Solid line"} /></Line>
          <Line $gap={4}><Icon name="lweight" /><Pick label="Épaisseur de ligne" value="ByLayer" lead={<WeightLine />} /></Line>
        </Rows>
        <Rows $w={35}>
          <Line><button aria-label="Style d'impression"><Icon name="bars" /></button></Line>
          <Line $gap={5} $pad={4}><button aria-label="Transparence"><Icon name="layerChecker" /></button><Caret /></Line>
        </Rows>
        <Rows $w={109}>
          <Line><Pick label="Style" value="" /></Line>
          <Line $gap={3}><Slider type="range" aria-label="Transparence" min={0} max={90} defaultValue={0} /><ValueBox>0</ValueBox></Line>
          <Line $gap={2}>
            <ToolButton $on aria-label="Propriétés"><Icon name="styleA" size={14} /></ToolButton>
            <ToolButton aria-label="Palette"><Icon name="panelList" size={15} /></ToolButton>
            <ToolButton aria-label="Feuille"><Icon name="page" size={15} /></ToolButton>
          </Line>
        </Rows>
      </GroupBody>
      <GroupName>Propriétés</GroupName>
    </Group>
    <FarGroup>A</FarGroup>
    <FarEdge aria-label="Défiler le ruban"><Icon name="far" size={4} /></FarEdge>
  </Ribbon>
);

/* ---------- drawing area ---------- */

const Body = styled.div`
  display: flex;
  flex: 1;
  min-height: 0;
  border-top: 1px solid #000;
`;
const Work = styled.div`
  display: flex;
  flex-direction: column;
  flex: 1;
  min-width: 0;
`;
const WorkRow = styled.div`
  display: flex;
  flex: 1;
  min-height: 0;
`;
const DocColumn = styled.main`
  display: flex;
  flex-direction: column;
  flex: 1;
  min-width: 0;
  padding-left: 3px;
`;
const DocTabs = styled.div`
  display: flex;
  height: 19px;
  margin-bottom: 3px;
`;
const DocTab = styled.div<{ $on?: boolean; $w: number }>`
  display: flex;
  align-items: center;
  width: ${(p) => p.$w}px;
  padding: 0 9px 0 10px;
  background: ${(p) => (p.$on ? c.title : "#38393b")};
  color: #cacbcc;
  button:first-child { flex: 1; justify-content: ${(p) => (p.$on ? "center" : "flex-start")}; }
`;
const AddTab = styled.button`
  width: 22px;
  background: #303133;
`;
const Canvas = styled.div`
  position: relative;
  flex: 1;
  min-height: 0;
  background: #000;
  overflow: hidden;
`;
const Drawing = styled.svg`
  position: absolute;
  inset: 0;
  width: 100%;
  height: 100%;
`;
const Ucs = styled.svg`
  position: absolute;
  left: 84px;
  bottom: 49px;
`;
const Wheel = styled.svg`
  position: absolute;
  right: 39px;
  bottom: 19px;
`;
const Entry = styled.div`
  position: absolute;
  left: 351px;
  top: 244px;
  display: flex;
  gap: 6px;
  font: 11px ${CMD};
`;
const Distance = styled.input`
  width: 45px;
  height: 16px;
  padding: 2px 4px 2px 2px;
  border: 0;
  color: #e9f3fa;
  background: linear-gradient(#1a78bd, #1a78bd) content-box, #fff;
`;
const Angle = styled.label`
  display: flex;
  align-items: center;
  gap: 5px;
  width: 38px;
  height: 16px;
  padding: 0 1px 0 6px;
  background: #8d8d8d;
  color: #151515;
  input { width: 10px; }
`;
const Degree = styled.span`
  align-self: flex-start;
`;
const NavButtons = styled.div`
  position: absolute;
  right: 9px;
  bottom: 7px;
  display: flex;
  flex-direction: column;
  gap: 4px;
`;
const NavButton = styled.button<{ $lit?: boolean }>`
  width: 22px;
  height: 22px;
  background: ${(p) => (p.$lit ? "#555657" : "#3d3e3f")};
  border: 1px solid #505152;
  color: #8c8c8c;
`;
const SheetTabs = styled.div`
  display: flex;
  align-items: center;
  height: 14px;
  background: ${c.panel};
`;
const SheetTab = styled.button<{ $on?: boolean }>`
  height: 14px;
  padding: 0 12px;
  clip-path: polygon(0 0, 100% 0, calc(100% - 6px) 100%, 6px 100%);
  background: ${(p) => (p.$on ? "#616264" : "#242527")};
  ${(p) => p.$on && css`
    padding: 0 10px;
    font: 700 10px ${BOLD};
  `}
`;
const AddSheet = styled.button`
  width: 18px;
  height: 13px;
  margin-left: 5px;
  background: #28292b;
`;

const arcSegment = (a: number) => {
  const r = 51, i = 30, s = ((a - 21) * Math.PI) / 180, e = ((a + 21) * Math.PI) / 180;
  const p = (rad: number, t: number) => `${(52 + rad * Math.cos(t)).toFixed(2)} ${(52 + rad * Math.sin(t)).toFixed(2)}`;
  return `M${p(i, s)}L${p(r, s)}A${r} ${r} 0 0 1 ${p(r, e)}L${p(i, e)}A${i} ${i} 0 0 0 ${p(i, s)}Z`;
};

const BrokenCross = () => (
  <path d="M3 2 28 15M35 18 40 21M47 25 77 40M85 43 90 46M97 49 122 62M122 2 97 15M90 18 85 21M77 25 47 40M40 43 35 46M28 49 3 62" />
);

const CanvasArea = () => (
  <Canvas>
    <Drawing aria-label="Dessin">
      <defs>
        <filter id="glow" x="-10%" y="-10%" width="120%" height="120%"><feGaussianBlur stdDeviation="1" /></filter>
      </defs>
      <g fill="none" transform="translate(90 84)">
        <rect width="124" height="64" stroke="#2f6fb4" strokeWidth="4" filter="url(#glow)" />
        <g filter="url(#glow)" stroke="#6a6894" strokeWidth="4"><BrokenCross /></g>
        <circle cx="62" cy="32" r="26" stroke="#1f4f9c" strokeWidth="3" filter="url(#glow)" />
        <circle cx="62" cy="32" r="26" stroke="#3565b5" strokeWidth="2" />
        <rect width="124" height="64" stroke="#a9cdea" strokeWidth="1" />
      </g>
      <path d="M216 147H449" stroke="#b9bab2" shapeRendering="crispEdges" />
      <g fill="none" stroke="#0808a0">
        <path d="M289 83h125v63h-125zM289 83l125 63M289 146l125-63" shapeRendering="crispEdges" />
        <circle cx="352" cy="116" r="26" />
        <circle cx="388" cy="116" r="26" />
      </g>
      <path d="M325 83h124v64h-124z" fill="none" stroke="#d8d8d8" shapeRendering="crispEdges" />
      <g transform="translate(325 83)" stroke="#c80f1e"><BrokenCross /></g>
      <path d="M325 195v81" stroke="#35c435" shapeRendering="crispEdges" />
      <rect x="285" y="235" width="80" height="1" fill="#9c1015" />
      <rect x="321" y="231" width="8" height="8" fill="none" stroke="#e8e8e8" shapeRendering="crispEdges" />
    </Drawing>
    <Ucs width="74" height="72" fill="none" stroke="#e4e4e4" aria-hidden="true">
      <path d="M8 17v46M8 62h50M4 58h8v8H4zM4 62h8M8 58v8" shapeRendering="crispEdges" />
      <path d="m5 18 3-6 3 6M51 58.500l7 3.500-7 3.500" />
      <text x="4" y="10" fill="#e4e4e4" stroke="none" fontFamily={CMD} fontSize="12">Y</text>
      <text x="61" y="66" fill="#e4e4e4" stroke="none" fontFamily={CMD} fontSize="12">X</text>
    </Ucs>
    <Entry>
      <Distance aria-label="Distance" defaultValue="216.277" />
      <Angle>&lt;<input aria-label="Angle" defaultValue="0" /><Degree>°</Degree></Angle>
    </Entry>
    <Wheel width="104" height="104" viewBox="0 0 104 104" aria-label="Roue de navigation">
      {[0, 45, 90, 135, 180, 225, 270, 315].map((a) => <path key={a} d={arcSegment(a)} fill="#3b3d3d" />)}
      <path d="M24 51a28 28 0 0 1 56 0H70a18 18 0 0 0-36 0Z" fill="#0a4a5d" />
      <path d="M24 54a28 28 0 0 0 56 0H70a18 18 0 0 1-36 0Z" fill="#454747" />
      <path d="M43 47h14v14H43zM43 47l4-4h14l-4 4M61 43v13l-4 5M47 43v14h14" fill="none" stroke="#77797a" />
      <path d="m43 47 4-4h14l-4 4Z" fill="#77797a" />
    </Wheel>
    <NavButtons>
      {["house", "ring", "pic", "ring", "cog"].map((n, i) => (
        <NavButton key={i} $lit={i === 2} aria-label={`Navigation ${i + 1}`}><Icon name={n} size={14} /></NavButton>
      ))}
    </NavButtons>
  </Canvas>
);

/* ---------- properties palette ---------- */

const Palette = styled.aside`
  display: flex;
  flex-direction: column;
  width: 291px;
  margin-left: 3px;
  padding: 8px 9px 9px;
  background: ${c.panel};
  border-left: 1px solid #151617;
`;
const PaletteTop = styled.div`
  display: flex;
  flex: none;
  height: 18px;
  margin-bottom: 5px;
`;
const PaletteTools = styled.div`
  display: flex;
  gap: 5px;
  margin-bottom: 3px;
`;
const Scroller = styled.div`
  display: flex;
  flex: 1;
  gap: 8px;
  min-height: 0;
`;
const Sections = styled.div`
  display: flex;
  flex-direction: column;
  flex: 1;
  gap: 4px;
  overflow: hidden;
`;
const Section = styled.section`
  flex: none;
  border: 1px solid #161718;
`;
const SectionHead = styled.button`
  display: flex;
  justify-content: space-between;
  width: 100%;
  height: 16px;
  padding: 0 1px 0 3px;
  background: ${c.dark};
  border-bottom: 1px solid #0f1011;
  font: 700 10px ${BOLD};
  color: #707274;
`;
const Props = styled.div`
  display: grid;
  gap: 2px;
  padding: 10px 0 0;
`;
const Prop = styled.div`
  display: flex;
  align-items: center;
  gap: 8px;
  padding-left: 8px;
`;
const ScrollBar = styled.div`
  display: flex;
  flex-direction: column;
  justify-content: space-between;
  align-items: center;
  width: 14px;
  padding: 2px 0;
  background: #131416;
  color: #9a9b9c;
`;
const PaletteStrip = styled.div`
  display: flex;
  flex-direction: column;
  align-items: center;
  gap: 9px;
  width: 19px;
  margin-left: 1px;
  padding: 3px 0 2px;
  background: ${c.title};
  border-left: 1px solid #000;
  color: #e2e2e2;
`;
const Sideways = styled.span`
  writing-mode: vertical-rl;
  transform: rotate(180deg);
  white-space: nowrap;
`;
const StripTitle = styled(Sideways)`
  margin-top: auto;
  font: 700 10px ${BOLD};
`;
const SideTabs = styled.div`
  display: flex;
  flex-direction: column;
  width: 21px;
  border-left: 2px solid #0e0f10;
`;
const SideTab = styled.button<{ $f: number; $on?: boolean }>`
  flex: ${(p) => p.$f} 1 0;
  min-height: 0;
  align-items: flex-end;
  background: ${(p) => (p.$on ? c.title : c.panel)};
  border-bottom: 2px solid #141516;
  ${Sideways} { margin-bottom: 8px; }
`;

type P = { icon: string; label: string; value: string; kind: "s" | "i"; lead?: "dot" | "line" };
const groups: { name: string; rows: P[] }[] = [
  { name: "Général", rows: [
    { icon: "layers", label: "Calque", value: "CACHE", kind: "s" },
    { icon: "bucket", label: "Couleur de ligne", value: "ByLayer", kind: "s", lead: "dot" },
    { icon: "lscale", label: "Échelle de ligne", value: "1", kind: "i" },
    { icon: "lweight", label: "Épaisseur", value: "ByLayer", kind: "s", lead: "line" },
    { icon: "link", label: "Lien", value: "", kind: "i" },
    { icon: "ltype", label: "Style de ligne", value: "ByLayer\u00a0\u00a0\u00a0\u00a0\u00a0\u00a0Solid line", kind: "s" },
    { icon: "checker", label: "Transparence de l'objet", value: "ByLayer", kind: "s" },
  ] },
  { name: "StyleImpression", rows: [
    { icon: "globe", label: "Espace", value: "Non", kind: "s" },
    { icon: "printer", label: "Table", value: "monochrome.ctb", kind: "s" },
    { icon: "bars", label: "Style d'impression", value: "", kind: "s" },
    { icon: "rays", label: "Type de table", value: "Aucune", kind: "i" },
  ] },
  { name: "Vue", rows: [
    { icon: "cx", label: "Centre X", value: "187.541", kind: "i" },
    { icon: "cy", label: "Centre Y", value: "138.292", kind: "i" },
    { icon: "cz", label: "Centre Z", value: "0", kind: "i" },
    { icon: "height", label: "Hauteur", value: "385.2", kind: "i" },
  ] },
];
const sideTabs: [string, number][] = [["3DEXPERIENCE PLM S…", 126], ["3D CONTENTCE…", 99], ["Ac…", 40], ["Ho…", 48], ["Générateur de …", 97], ["Pro…", 42]];

const PaletteArea = () => (
  <>
    <Palette>
      <PaletteTop><Pick h={18} label="Sélection" value="Pas de sélection" /></PaletteTop>
      <PaletteTools>
        {["box", "cursor", "cursorBox", "flash"].map((n, i) => (
          <ToolButton key={n} $border $off={i < 3} aria-label={`Outil ${n}`}><Icon name={n} size={18} /></ToolButton>
        ))}
        <ToolButton $border aria-label="Aide">?</ToolButton>
      </PaletteTools>
      <Scroller>
        <Sections>
          {groups.map((g) => (
            <Section key={g.name}>
              <SectionHead>{g.name}<Icon name="up" size={14} color="#c4c5c6" /></SectionHead>
              <Props>
                {g.rows.map((r) => (
                  <Prop key={r.label}>
                    <Icon name={r.icon} color="#dcdcdc" />
                    {r.kind === "s" ? (
                      <Pick label={r.label} value={r.value} lead={r.lead === "dot" ? <Icon name="grey" size={10} /> : r.lead === "line" ? <WeightLine /> : undefined} />
                    ) : (
                      <Field $h={20}><input aria-label={r.label} defaultValue={r.value} /></Field>
                    )}
                  </Prop>
                ))}
              </Props>
            </Section>
          ))}
        </Sections>
        <ScrollBar><Icon name="up" size={9} /><Icon name="down" size={9} /></ScrollBar>
      </Scroller>
    </Palette>
    <PaletteStrip>
      <button aria-label="Fermer la palette"><Icon name="xb" size={10} /></button>
      <button aria-label="Épingler"><Icon name="pin" size={12} /></button>
      <StripTitle>Propriétés</StripTitle>
      <Icon name="styleA" size={12} />
    </PaletteStrip>
    <SideTabs>
      {sideTabs.map(([t, f], i) => <SideTab key={t} $f={f} $on={i === 5}><Sideways>{t}</Sideways></SideTab>)}
    </SideTabs>
  </>
);

/* ---------- command window ---------- */

const Command = styled.section`
  margin-top: 4px;
  border-top: 1px solid #000;
  background: #141516;
  font: 11px/12px ${CMD};
  color: #c2c2c2;
  p { margin: 0; }
  b { color: #d0d0d0; }
  a { color: ${c.link}; }
`;
const CommandHead = styled.div`
  display: flex;
  align-items: center;
  gap: 9px;
  height: 16px;
  padding: 0 6px;
  background: ${c.title};
`;
const CommandTitle = styled.h2`
  margin: 0;
  flex: 1;
  font: 700 10px ${BOLD};
  color: #d0d0d0;
`;
const History = styled.div`
  display: flex;
  justify-content: space-between;
  height: 29px;
  padding: 1px 4px 0 7px;
  border-bottom: 1px solid #060606;
`;
const Prompt = styled.div`
  height: 38px;
  padding: 0 6px;
  line-height: 13px;
`;
const Arrows = styled.div`
  display: flex;
  flex-direction: column;
  justify-content: space-around;
  color: #fff;
`;
const Key = styled.a<{ $plain?: boolean }>`
  ${(p) => p.$plain && css`text-decoration: none;`}
`;
const Default = styled.strong`
  color: #e8891c;
`;

/* ---------- side toolbar and status bar ---------- */

const SideTools = styled.div`
  display: flex;
  flex-direction: column;
  align-items: center;
  justify-content: space-between;
  width: 25px;
  padding: 2px 2px 0 0;
  background: ${c.panel};
  color: #b0b1b2;
  overflow: hidden;
`;
const Grip = styled.span`
  width: 15px;
  border-top: 2px dotted #a5a6a7;
`;
const Status = styled.footer`
  display: flex;
  align-items: center;
  height: 30px;
  padding: 0 2px 1px 4px;
  background: #353638;
`;
const Version = styled.span`
  width: 263px;
`;
const StatusTools = styled.div`
  display: flex;
  justify-content: space-between;
  width: 299px;
  margin-right: 8px;
`;
const ScalePick = styled.div`
  display: flex;
  align-items: center;
  width: 79px;
  height: 19px;
  margin-right: 6px;
  padding: 0 4px 0 2px;
  border: 1px solid #1b1c1d;
  select { flex: 1; min-width: 0; }
`;
const Coords = styled.span`
  flex: 1;
  white-space: pre;
`;

const sideIcons = ["eraser", "copyO", "move", "copy", "tri2", "moveB", "align", "grid", "rotate", "scale", "stretch", "swap", "curve", "curveP", "chamR", "chamR", "cham2", "vjoin", "vline", "trim2", "trim3", "scis", "hatchEd", "sq", "chev"];
const statusIcons: [string, boolean][] = [["eye", true], ["snap", false], ["gridOn", false], ["ortho", true], ["polar", false], ["esnap", true], ["etrack", true], ["quick", true], ["dyn", true], ["over", true], ["plus", false]];

export default function App() {
  return (
    <Frame>
      <GlobalStyle />
      <TopArea />
      <RibbonArea />
      <Body>
        <Work>
          <WorkRow>
            <DocColumn>
              <DocTabs>
                <DocTab $w={182}><button>Magasin+Maiso…logements.dwg</button><button aria-label="Fermer l'onglet"><Icon name="close" size={14} /></button></DocTab>
                <DocTab $on $w={181}><button>NONAME_7.dwg*</button><button aria-label="Fermer l'onglet"><Icon name="close" size={14} /></button></DocTab>
                <AddTab aria-label="Nouvel onglet"><Icon name="plus" size={13} /></AddTab>
              </DocTabs>
              <CanvasArea />
              <SheetTabs>
                <SheetTab $on>Modèle</SheetTab>
                <SheetTab>Sheet1</SheetTab>
                <SheetTab>Sheet2</SheetTab>
                <AddSheet aria-label="Ajouter une feuille"><Icon name="plus" size={12} /></AddSheet>
              </SheetTabs>
            </DocColumn>
            <PaletteArea />
          </WorkRow>
          <Command>
            <CommandHead>
              <CommandTitle>Fenêtre de commande</CommandTitle>
              <button aria-label="Détacher"><Icon name="restore" size={9} /></button>
              <button aria-label="Fermer la fenêtre de commande"><Icon name="xb" size={10} /></button>
            </CommandHead>
            <History>
              <div>
                <p>Options: <Key href="#motif">MOtif</Key>, <Key href="#entree" $plain><i>Entrée pour utiliser le premier point comme dépositionnement</i></Key> ou</p>
                <p><b>Spécifiez le deuxième point»</b></p>
              </div>
              <Arrows><Icon name="up" size={9} /><Icon name="down" size={9} /></Arrows>
            </History>
            <Prompt>
              <p>Défaut: <Default>Quitter</Default></p>
              <p>Options: <Key href="#motif">MOtif</Key>, <Key href="#quitter" $plain><u>Q</u>uitter</Key> ou <Key href="#annuler" $plain>ann<u>U</u>ler</Key></p>
              <p><b>Spécifiez le deuxième point»</b></p>
            </Prompt>
          </Command>
        </Work>
        <SideTools>
          <Grip />
          {sideIcons.map((n, i) => <button key={i} aria-label={`Commande ${i + 1}`}><Icon name={n} size={14} /></button>)}
        </SideTools>
      </Body>
      <Status>
        <Version>DraftSight 2024 x64</Version>
        <StatusTools>
          {statusIcons.map(([n, on]) => <ToolButton key={n} $on={on} $border aria-label={n}><Icon name={n} size={15} /></ToolButton>)}
        </StatusTools>
        <ScalePick>
          <select aria-label="Annotation" defaultValue="Annotation"><option>Annotation</option></select>
          <Icon name="down" size={10} />
        </ScalePick>
        <Coords>(1:1)  (216.277&lt; 0 0)</Coords>
        <svg width="12" height="12" fill="#9a9b9c" aria-hidden="true">
          <path d="M9 1h2v2H9zM9 5h2v2H9zM5 5h2v2H5zM9 9h2v2H9zM5 9h2v2H5zM1 9h2v2H1z" />
        </svg>
      </Status>
    </Frame>
  );
}
